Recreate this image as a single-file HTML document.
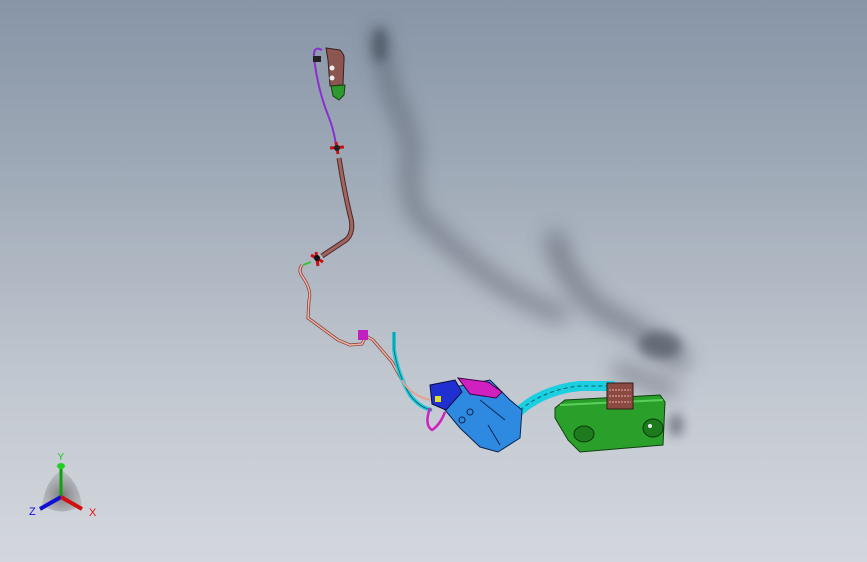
<!DOCTYPE html>
<html><head><style>
html,body{margin:0;padding:0}
body{width:867px;height:562px;overflow:hidden;background:linear-gradient(180deg,#8795a7 0%,#a3adba 35%,#c3c9d1 70%,#d3d7dd 100%);font-family:"Liberation Sans",sans-serif}
svg{position:absolute;left:0;top:0}
</style></head><body>
<svg width="867" height="562" viewBox="0 0 867 562">
<defs>
<filter id="b1" x="-50%" y="-50%" width="200%" height="200%"><feGaussianBlur stdDeviation="10"/></filter>
<filter id="b2" x="-50%" y="-50%" width="200%" height="200%"><feGaussianBlur stdDeviation="5"/></filter>
<radialGradient id="tri" cx="0.5" cy="0.6" r="0.6"><stop offset="0" stop-color="#555"/><stop offset="1" stop-color="#999" stop-opacity="0.4"/></radialGradient>
</defs>
<g opacity="0.45" filter="url(#b1)" fill="none" stroke="#3c4250" stroke-linecap="round">
<path d="M378 35 Q385 70 392 95 Q405 120 412 150 Q405 190 418 215 Q450 245 480 270 Q520 300 560 315" stroke-width="16"/>
<path d="M555 240 Q565 280 600 310 Q640 330 680 360" stroke-width="20"/>
<path d="M620 370 L670 390" stroke-width="16"/>
</g>
<g opacity="0.45" filter="url(#b2)" fill="#2e3442">
<ellipse cx="380" cy="45" rx="8" ry="18"/>
<ellipse cx="660" cy="345" rx="22" ry="14"/>
<ellipse cx="676" cy="425" rx="8" ry="12"/>
</g>
<path d="M322 50 Q313 45 314 58 Q318 90 328 115 Q334 130 336 145" fill="none" stroke="#8a2fd0" stroke-width="2"/>
<path d="M326 48 L340 50 Q345 55 344 60 L343 85 L330 86 L328 60 Z" fill="#8b5550" stroke="#3a2020" stroke-width="1"/>
<circle cx="332" cy="68" r="2.5" fill="#eee"/><circle cx="332" cy="78" r="2.5" fill="#eee"/>
<rect x="313" y="56" width="8" height="6" fill="#222"/>
<path d="M331 86 L345 85 L344 95 L339 100 L333 96 Z" fill="#2e9a2e" stroke="#154015" stroke-width="1"/>
<path d="M330 148 L344 147 M336 142 L338 154" stroke="#c81010" stroke-width="3"/>
<circle cx="337" cy="148" r="3" fill="#222"/>
<path d="M339 158 Q344 190 350 215 Q355 232 346 240 L322 256" fill="none" stroke="#4a2a25" stroke-width="5"/>
<path d="M339 158 Q344 190 350 215 Q355 232 346 240 L322 256" fill="none" stroke="#a26460" stroke-width="3"/>
<path d="M311 255 L323 262 M316 252 L318 266" stroke="#c81010" stroke-width="3"/>
<circle cx="317" cy="258" r="3" fill="#111"/>
<path d="M311 262 L303 265" stroke="#3ac03a" stroke-width="2"/>
<path d="M302 265 Q298 270 302 276 Q312 290 309 300 L308 318 L338 340 L350 345 L362 344 L366 336 L373 340 L392 362 L402 380" fill="none" stroke="#7a3a34" stroke-width="3"/>
<path d="M302 265 Q298 270 302 276 Q312 290 309 300 L308 318 L338 340 L350 345 L362 344 L366 336 L373 340 L392 362 L402 380" fill="none" stroke="#f0b0a4" stroke-width="1.6"/>
<rect x="358" y="330" width="10" height="10" fill="#c020c0"/>
<path d="M394 332 L394 350 Q398 375 410 395 Q420 408 432 410" fill="none" stroke="#22c8d8" stroke-width="4"/>
<path d="M394 332 L394 350 Q398 375 410 395 Q420 408 432 410" fill="none" stroke="#0a5060" stroke-width="0.7"/>
<path d="M402 380 Q410 395 430 400" fill="none" stroke="#e8a090" stroke-width="2"/>
<path d="M515 415 Q540 390 580 386 L615 386" fill="none" stroke="#1ad0e0" stroke-width="10"/>
<path d="M515 415 Q540 390 580 386 L615 386" fill="none" stroke="#0a6070" stroke-width="1" stroke-dasharray="4 3"/>
<path d="M440 390 L490 380 L510 400 L522 410 L520 438 L498 452 L480 447 L460 428 L445 410 Z" fill="#2e8ae0" stroke="#0a2450" stroke-width="1"/>
<path d="M430 385 L455 380 L462 392 L446 410 L432 404 Z" fill="#2030d0" stroke="#0a0a40" stroke-width="1"/>
<path d="M458 378 L488 382 L502 392 L496 398 L470 394 Z" fill="#d020c0" stroke="#400040" stroke-width="1"/>
<path d="M430 408 Q424 425 432 430 Q440 425 445 412" fill="none" stroke="#d020c0" stroke-width="2.5"/>
<rect x="435" y="396" width="6" height="6" fill="#e0e020"/>
<g stroke="#0a2450" stroke-width="1" fill="none">
<circle cx="470" cy="412" r="3"/><circle cx="462" cy="420" r="3"/><path d="M480 400 L505 420 M488 425 L500 445"/>
</g>
<path d="M555 408 L565 400 L660 395 L665 402 L663 445 L580 452 L568 440 L555 418 Z" fill="#2aa02a" stroke="#104010" stroke-width="1"/>
<path d="M560 405 L663 400" stroke="#5ad05a" stroke-width="2"/>
<ellipse cx="584" cy="434" rx="10" ry="8" fill="#1d7a1d" stroke="#0c3a0c"/>
<ellipse cx="653" cy="428" rx="10" ry="9" fill="#1d7a1d" stroke="#0c3a0c"/>
<circle cx="650" cy="426" r="2" fill="#eee"/>
<rect x="607" y="383" width="26" height="26" fill="#8a4a42" stroke="#3a1a18"/>
<path d="M609 390 L631 390 M609 396 L631 396 M609 402 L631 402" stroke="#c89088" stroke-width="1.5" stroke-dasharray="2 1"/>
<path d="M61 470 Q78 480 82 505 Q62 518 42 505 Q46 480 61 470 Z" fill="url(#tri)" opacity="0.7"/>
<line x1="61" y1="496" x2="61" y2="466" stroke="#11a011" stroke-width="3"/>
<ellipse cx="61" cy="466" rx="4" ry="3" fill="#22d022"/>
<line x1="61" y1="497" x2="40" y2="509" stroke="#1010d0" stroke-width="4"/>
<line x1="61" y1="497" x2="82" y2="509" stroke="#d01010" stroke-width="4"/>
<text x="57.5" y="460" font-size="10" fill="#22c022">Y</text>
<text x="29" y="515" font-size="11" fill="#1010e0">Z</text>
<text x="89" y="516" font-size="11" fill="#e01010">X</text>
</svg>
</body></html>
